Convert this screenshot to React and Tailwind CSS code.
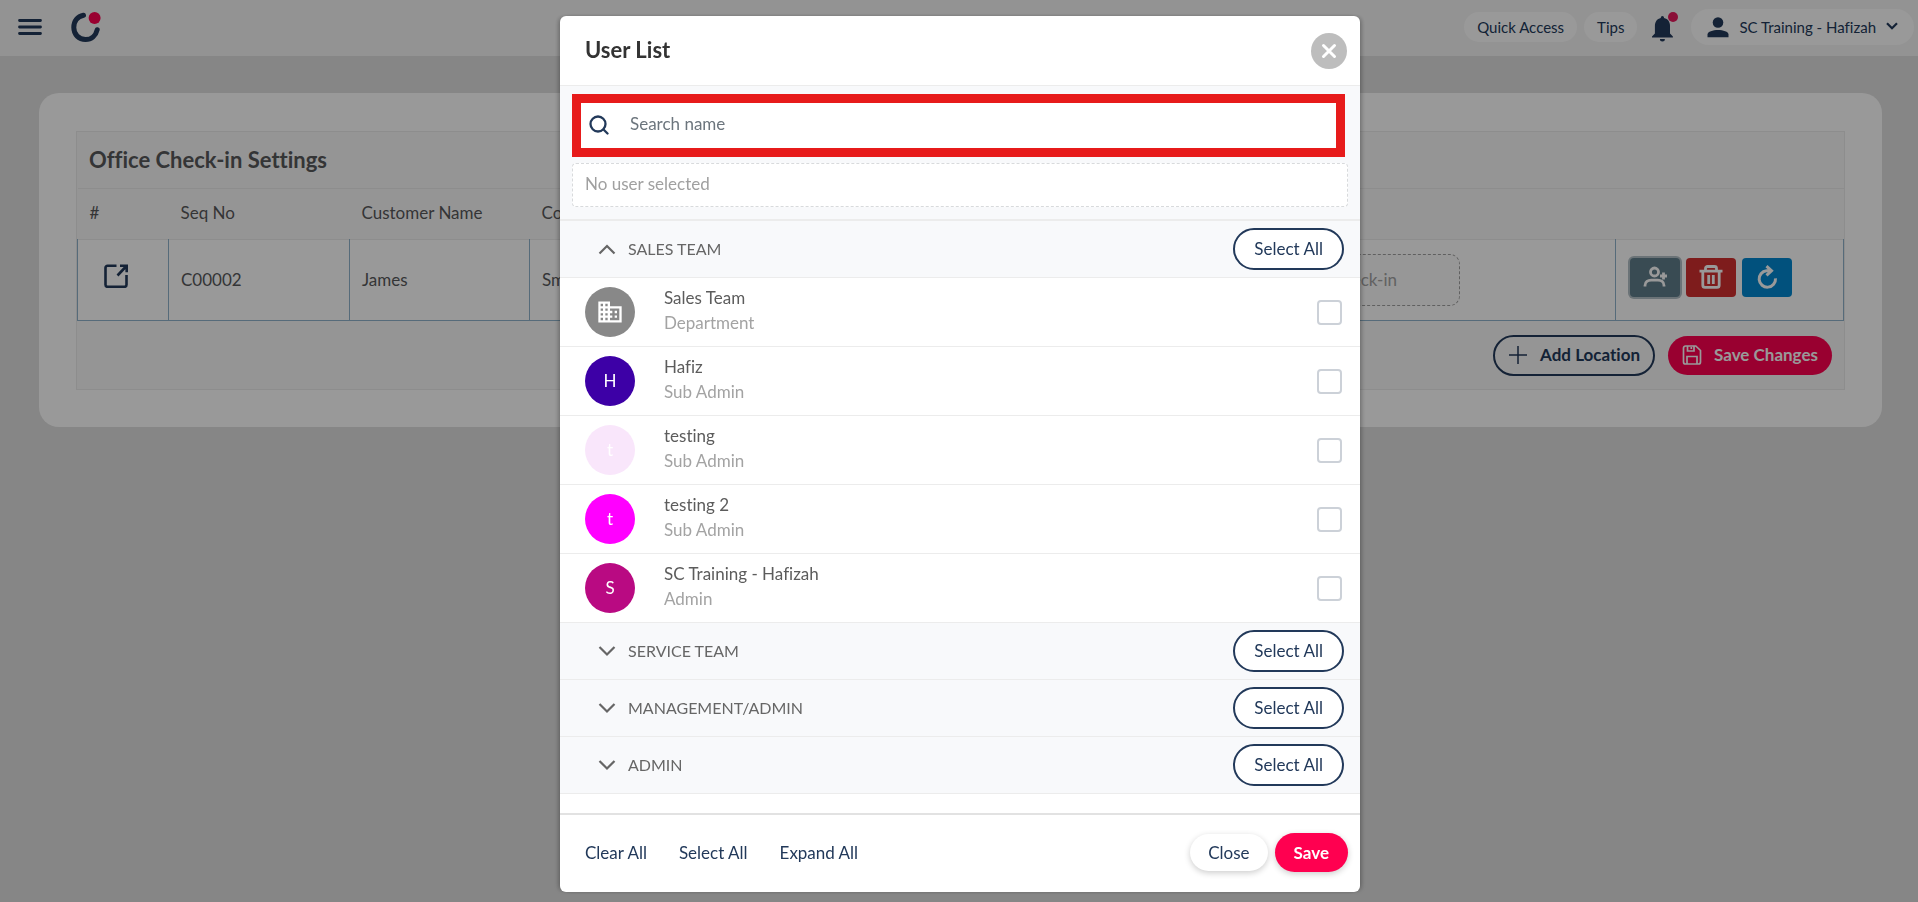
import { MdDomain } from "react-icons/md";

const departments = [
  {
    name: "SALES TEAM",
    open: true,
    members: [
      { name: "Sales Team", role: "Department", color: "bg-[#888888]", icon: true },
      { name: "Hafiz", role: "Sub Admin", initial: "H", color: "bg-[#3d00a6]" },
      { name: "testing", role: "Sub Admin", initial: "t", color: "bg-[#f9e6fb]" },
      { name: "testing 2", role: "Sub Admin", initial: "t", color: "bg-[#ff00ff]" },
      { name: "SC Training - Hafizah", role: "Admin", initial: "S", color: "bg-[#b90a82]" },
    ],
  },
  { name: "SERVICE TEAM", open: false, members: [] },
  { name: "MANAGEMENT/ADMIN", open: false, members: [] },
  { name: "ADMIN", open: false, members: [] },
];

function Chevron({ up }) {
  return (
    <svg viewBox="0 0 18 12" className="h-3 w-[18px]" fill="none" stroke="#666" strokeWidth="2.2">
      <path d={up ? "M1.5 10.5 9 3l7.5 7.5" : "M1.5 2 9 9.5 16.5 2"} />
    </svg>
  );
}

function TopBar() {
  return (
    <header className="flex h-14 items-center justify-between bg-[#f6f6f6] pb-0.5 pl-[18px] pr-1 text-[15px] text-[#22395a]">
      <div className="flex items-center gap-[29px]">
        <button aria-label="Menu">
          <svg viewBox="0 0 24 20" className="h-5 w-6" stroke="#22395a" strokeWidth="2.8" strokeLinecap="round">
            <path d="M1.500 3.500h21M1.500 10h21M1.500 16.500h21" />
          </svg>
        </button>
        <a href="#home" aria-label="Home">
          <svg viewBox="0 0 30 32" className="h-8 w-[30px]" fill="none">
            <path d="M12.500 4.200C6.500 5.500 2.800 10 2.800 16.500c0 7 5 12 11.700 12 6 0 10.300-3.800 11.700-9.800" stroke="#22395a" strokeWidth="5" strokeLinecap="round" />
            <circle cx="23.600" cy="7" r="6" fill="#ff0050" />
          </svg>
        </a>
      </div>
      <nav className="flex items-center">
        <button className="h-[30px] rounded-full bg-white px-[13px]">Quick Access</button>
        <button className="ml-[7px] h-[30px] rounded-full bg-white px-[13px]">Tips</button>
        <button className="ml-3.5" aria-label="Notifications">
          <svg viewBox="0 0 28 30" className="h-[30px] w-7">
            <path d="M9.800 5.500a1.600 1.600 0 0 1 3.200 0v.6c4 .8 6 4 6 8v7.500l2.900 3v.9H1v-.9l2.900-3v-7.500c0-4 2-7.200 5.900-8zM8.900 27h5a2.500 2.500 0 0 1-5 0z" fill="#22395a" />
            <circle cx="22" cy="5" r="5" fill="#e6195c" />
          </svg>
        </button>
        <button className="ml-3 flex h-9 items-center rounded-full bg-white pl-4 pr-4">
          <svg viewBox="0 0 22 22" className="mr-2.5 h-[22px] w-[22px]" fill="#22395a">
            <circle cx="11" cy="6.500" r="5.300" />
            <path d="M.5 21.200v-2.600C.5 15.500 6 14 11 14s10.500 1.500 10.500 4.600v2.600z" />
          </svg>
          SC Training - Hafizah
          <svg viewBox="0 0 12 8" className="mb-0.5 ml-2.5 h-2 w-3" fill="none" stroke="#22395a" strokeWidth="2.200">
            <path d="M1 1.200 6 6.200l5-5" />
          </svg>
        </button>
      </nav>
    </header>
  );
}

function CheckInSettings() {
  const head = "px-3 pb-0.5 font-normal";
  const cell = "border border-t-0 border-[#8fb3cb] px-3";
  return (
    <section className="mx-[39px] mt-[37px] mr-9 rounded-[20px] bg-white px-[37px] pb-[37px] pt-[38px]">
      <div className="border border-[#ececec] bg-[#f8f8f8] text-[#58595b]">
        <h1 className="flex h-14 items-center px-3 pb-0.5 text-[22px] font-bold text-[#58595b]">Office Check-in Settings</h1>
        <table className="w-full table-fixed border-collapse text-left text-[17px]">
          <colgroup>
            <col className="w-[91px]" />
            <col className="w-[181px]" />
            <col className="w-[180px]" />
            <col className="w-[180px]" />
            <col />
            <col className="w-[228px]" />
          </colgroup>
          <thead>
            <tr className="h-[51px] border-y border-[#ececec]">
              <th className={head}>#</th>
              <th className={head}>Seq No</th>
              <th className={head}>Customer Name</th>
              <th className={head}>Company</th>
              <th />
              <th />
            </tr>
          </thead>
          <tbody>
            <tr className="h-[81px] bg-white">
              <td className={cell}>
                <button aria-label="Open location" className="ml-3.5 block pb-2">
                  <svg viewBox="0 0 24 24" className="h-6 w-6" fill="none" stroke="#22395a" strokeWidth="2.600">
                    <path d="M12.500 1.800H3.500a2 2 0 0 0-2 2v17a2 2 0 0 0 2 2h17a2 2 0 0 0 2-2V11M16 1.800h6.700v6.500M22 2.500l-8.500 9" />
                  </svg>
                </button>
              </td>
              <td className={cell}>C00002</td>
              <td className={cell}>James</td>
              <td className={cell}>Smart</td>
              <td className={cell}>
                <div className="mr-[143px] flex h-[52px] items-center justify-end rounded-[10px] border border-dashed border-[#a0a0a0] bg-[#fcfcfc] pr-[62px] text-[#a3a3a3]">
                  check-in
                </div>
              </td>
              <td className={cell}>
                <div className="ml-0.5 flex gap-1.5 pb-1.5">
                  <button aria-label="Assign user" className="flex h-[39px] w-[50px] items-center justify-center rounded bg-[#607d8b] ring-2 ring-[#b3c0c6]">
                    <svg viewBox="0 0 24 24" className="h-6 w-6" fill="none" stroke="#fff" strokeWidth="2.800">
                      <circle cx="11.500" cy="7" r="4" />
                      <path d="M2 21.500v-1c0-3.700 3-5.300 6.200-5.300h6.600c3.200 0 6.200 1.600 6.200 5.300v1M17 11h7M20.500 7.500v7" />
                    </svg>
                  </button>
                  <button aria-label="Delete" className="flex h-[39px] w-[50px] items-center justify-center rounded bg-[#d32f2f]">
                    <svg viewBox="0 0 24 24" className="h-6 w-6" fill="none" stroke="#fff" strokeWidth="2.800">
                      <path d="M.5 6.200h23M6.500 6V3.500a2 2 0 0 1 2-2h7a2 2 0 0 1 2 2V6M3.800 6.500v13.700a2.200 2.200 0 0 0 2.200 2.200h12a2.200 2.200 0 0 0 2.200-2.200V6.500M9.700 10v9M14.300 10v9" />
                    </svg>
                  </button>
                  <button aria-label="Reset" className="flex h-[39px] w-[50px] items-center justify-center rounded bg-[#0288d1]">
                    <svg viewBox="0 0 24 24" className="h-6 w-6" fill="none" stroke="#fff" strokeWidth="3">
                      <path d="M15.500 5.800H11.500a8.200 8.200 0 1 0 9 7.500M11.500 1.200l5 4.600-5 4.600" />
                    </svg>
                  </button>
                </div>
              </td>
            </tr>
          </tbody>
        </table>
        <div className="flex h-[68px] items-center justify-end gap-[13px] px-3 text-[17px] font-bold">
          <button className="flex h-[41px] items-center gap-3 rounded-full border-2 border-[#22395a] px-[13px] text-[#22395a]">
            <svg viewBox="0 0 20 20" className="h-5 w-5" stroke="#22395a" strokeWidth="1.500">
              <path d="M1 10h18M10 1v18" />
            </svg>
            Add Location
          </button>
          <button className="flex h-[39px] items-center gap-3 rounded-full bg-[#ff0050] px-3.5 text-white">
            <svg viewBox="0 0 20 20" className="h-5 w-5" fill="none" stroke="#fff" strokeWidth="1.700">
              <path d="M1.500 3a2 2 0 0 1 2-2h10.300L18.500 5.500V17a2 2 0 0 1-2 2h-13a2 2 0 0 1-2-2zM5.500 1v5h6.500V1M9.300 2v2M5 19v-7.500h10V19" />
            </svg>
            Save Changes
          </button>
        </div>
      </div>
    </section>
  );
}

function MemberRow({ member }) {
  return (
    <label className="flex h-[69px] items-center border-b border-[#ececec] pl-[25px] pr-[18px]">
      <span className={`flex size-[50px] items-center justify-center rounded-full text-[17px] text-white ${member.color}`}>
        {member.icon ? <MdDomain className="size-7" /> : member.initial}
      </span>
      <span className="ml-[29px] flex-1 pb-1 leading-[25px]">
        <span className="block text-[#5c5c5c]">{member.name}</span>
        <span className="block text-[#a3a3a3]">{member.role}</span>
      </span>
      <input type="checkbox" className="size-[25px] appearance-none rounded border-2 border-[#ccd1d8] bg-white" />
    </label>
  );
}

function Department({ department }) {
  return (
    <div>
      <div className="flex h-[57px] items-center justify-between border-b border-[#ececec] bg-[#f8f9fb] pl-[38px] pr-4">
        <button className="flex items-center gap-3 text-[16px] text-[#666]" aria-expanded={department.open}>
          <Chevron up={department.open} />
          {department.name}
        </button>
        <button className="h-[42px] rounded-full border-2 border-[#22395a] bg-white px-[19px] pb-px text-[#22395a]">Select All</button>
      </div>
      {department.members.map((m) => (
        <MemberRow key={m.name} member={m} />
      ))}
    </div>
  );
}

function UserListDialog() {
  return (
    <div className="fixed inset-0 flex items-start justify-center overflow-hidden bg-black/40 pl-0.5 pt-4">
      <div
        role="dialog"
        aria-label="User List"
        className="w-full max-w-[800px] rounded-md bg-white text-[17px] shadow-[3px_0_5px_-2px_rgba(0,0,0,0.350),-3px_0_5px_-2px_rgba(0,0,0,0.350)]"
      >
        <div className="flex h-[70px] items-center justify-between border-b border-[#ececec] pl-[25px] pr-[13px]">
          <h2 className="pb-0.5 text-[22px] font-bold text-[#333]">User List</h2>
          <button aria-label="Close dialog" className="flex size-9 items-center justify-center rounded-full bg-[#bdbdbd]">
            <svg viewBox="0 0 16 16" className="size-4" stroke="#fff" strokeWidth="3" strokeLinecap="round">
              <path d="M2.500 2.500l11 11M13.500 2.500l-11 11" />
            </svg>
          </button>
        </div>

        <div className="border-b-2 border-[#ececec] bg-[#f8f9fb] px-3 pb-3 pt-2">
          <div className="mr-[3px] flex h-[63px] items-center border-[9px] border-[#e71b1b] bg-white pb-0.5 pl-2">
            <svg viewBox="0 0 20 20" className="size-5" fill="none" stroke="#22395a" strokeWidth="2.300" strokeLinecap="round">
              <circle cx="9" cy="9" r="7.500" />
              <path d="M14.500 14.500 18.500 18.500" />
            </svg>
            <input
              type="text"
              aria-label="Search name"
              placeholder="Search name"
              className="ml-[21px] h-full flex-1 pb-0.5 outline-none placeholder:text-[#6c757d]"
            />
          </div>
          <div className="mt-1.5 flex h-11 items-center rounded border border-dashed border-[#d8dadc] bg-white px-3 pb-0.5 text-[#a0a0a0]">
            No user selected
          </div>
        </div>

        {departments.map((d) => (
          <Department key={d.name} department={d} />
        ))}

        <div className="mt-[19px] flex h-[79px] items-center justify-between border-t-2 border-[#e2e2e2] pb-0.5 pl-[25px] pr-3 text-[#22395a]">
          <div className="flex gap-8">
            <button>Clear All</button>
            <button>Select All</button>
            <button>Expand All</button>
          </div>
          <div className="flex items-center gap-[7px]">
            <button className="h-[37px] rounded-full bg-white px-[18px] shadow-[0_2px_6px_rgba(0,0,0,0.200)]">Close</button>
            <button className="h-[39px] rounded-full bg-[#ff0050] px-[19px] font-bold text-white shadow-[0_2px_6px_rgba(0,0,0,0.200)]">
              Save
            </button>
          </div>
        </div>
      </div>
    </div>
  );
}

export default function App() {
  return (
    <div className="min-h-screen bg-[#e0e0e0] font-['Lato',sans-serif] [font-variant-ligatures:none]">
      <TopBar />
      <CheckInSettings />
      <UserListDialog />
    </div>
  );
}
